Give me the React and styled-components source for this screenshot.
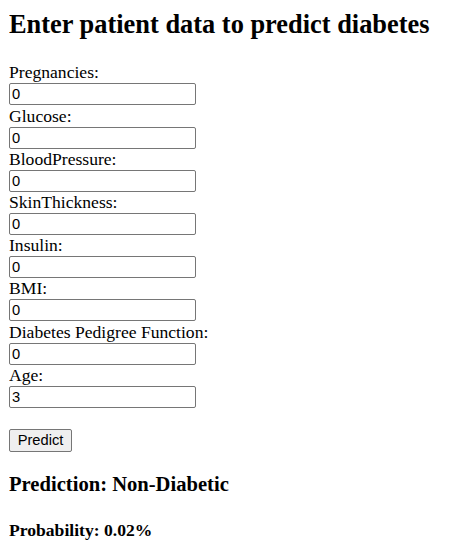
import React, { useState } from "react";
import styled, { createGlobalStyle } from "styled-components";

const GlobalStyle = createGlobalStyle`
  body {
    margin: 9px;
    font-family: "Liberation Serif", "Times New Roman", serif;
    font-size: 17.6px;
    color: #000;
    background: #fff;
  }
`;

const Title = styled.h2`
  font-size: 26.4px;
  font-weight: bold;
  margin: 0 0 22.4px;
`;

const Form = styled.form`
  margin: 0;
`;

const Label = styled.label`
  font-size: 17.6px;
`;

const Field = styled.input`
  box-sizing: border-box;
  width: 187px;
  height: 22px;
  margin: 0 0 0.2px;
  padding: 1px 2px;
  border: 1px solid #767676;
  border-radius: 2px;
  font-family: "Liberation Sans", Arial, sans-serif;
  font-size: 14.7px;
  color: #000;
  background: #fff;
`;

const Button = styled.button`
  box-sizing: border-box;
  width: 63px;
  height: 23px;
  padding: 1px 6px;
  border: 1px solid #767676;
  border-radius: 2px;
  background: #efefef;
  font-family: "Liberation Sans", Arial, sans-serif;
  font-size: 14.7px;
  color: #000;
`;

const Result = styled.h3`
  font-size: 20.6px;
  font-weight: bold;
  margin: 21.6px 0 20.6px;
`;

const Probability = styled.h4`
  font-size: 17.6px;
  font-weight: bold;
  margin: 23.4px 0;
`;

const fields = [
  ["pregnancies", "Pregnancies:", "0"],
  ["glucose", "Glucose:", "0"],
  ["bloodPressure", "BloodPressure:", "0"],
  ["skinThickness", "SkinThickness:", "0"],
  ["insulin", "Insulin:", "0"],
  ["bmi", "BMI:", "0"],
  ["dpf", "Diabetes Pedigree Function:", "0"],
  ["age", "Age:", "3"],
];

export default function App() {
  const [values, setValues] = useState(
    Object.fromEntries(fields.map(([key, , v]) => [key, v]))
  );

  return (
    <>
      <GlobalStyle />
      <Title>Enter patient data to predict diabetes</Title>
      <Form onSubmit={(e) => e.preventDefault()}>
        {fields.map(([key, label]) => (
          <React.Fragment key={key}>
            <Label htmlFor={key}>{label}</Label>
            <br />
            <Field
              id={key}
              type="text"
              value={values[key]}
              onChange={(e) => setValues({ ...values, [key]: e.target.value })}
            />
            <br />
          </React.Fragment>
        ))}
        <br />
        <Button type="submit">Predict</Button>
      </Form>
      <Result>Prediction: Non-Diabetic</Result>
      <Probability>Probability: 0.02%</Probability>
    </>
  );
}
